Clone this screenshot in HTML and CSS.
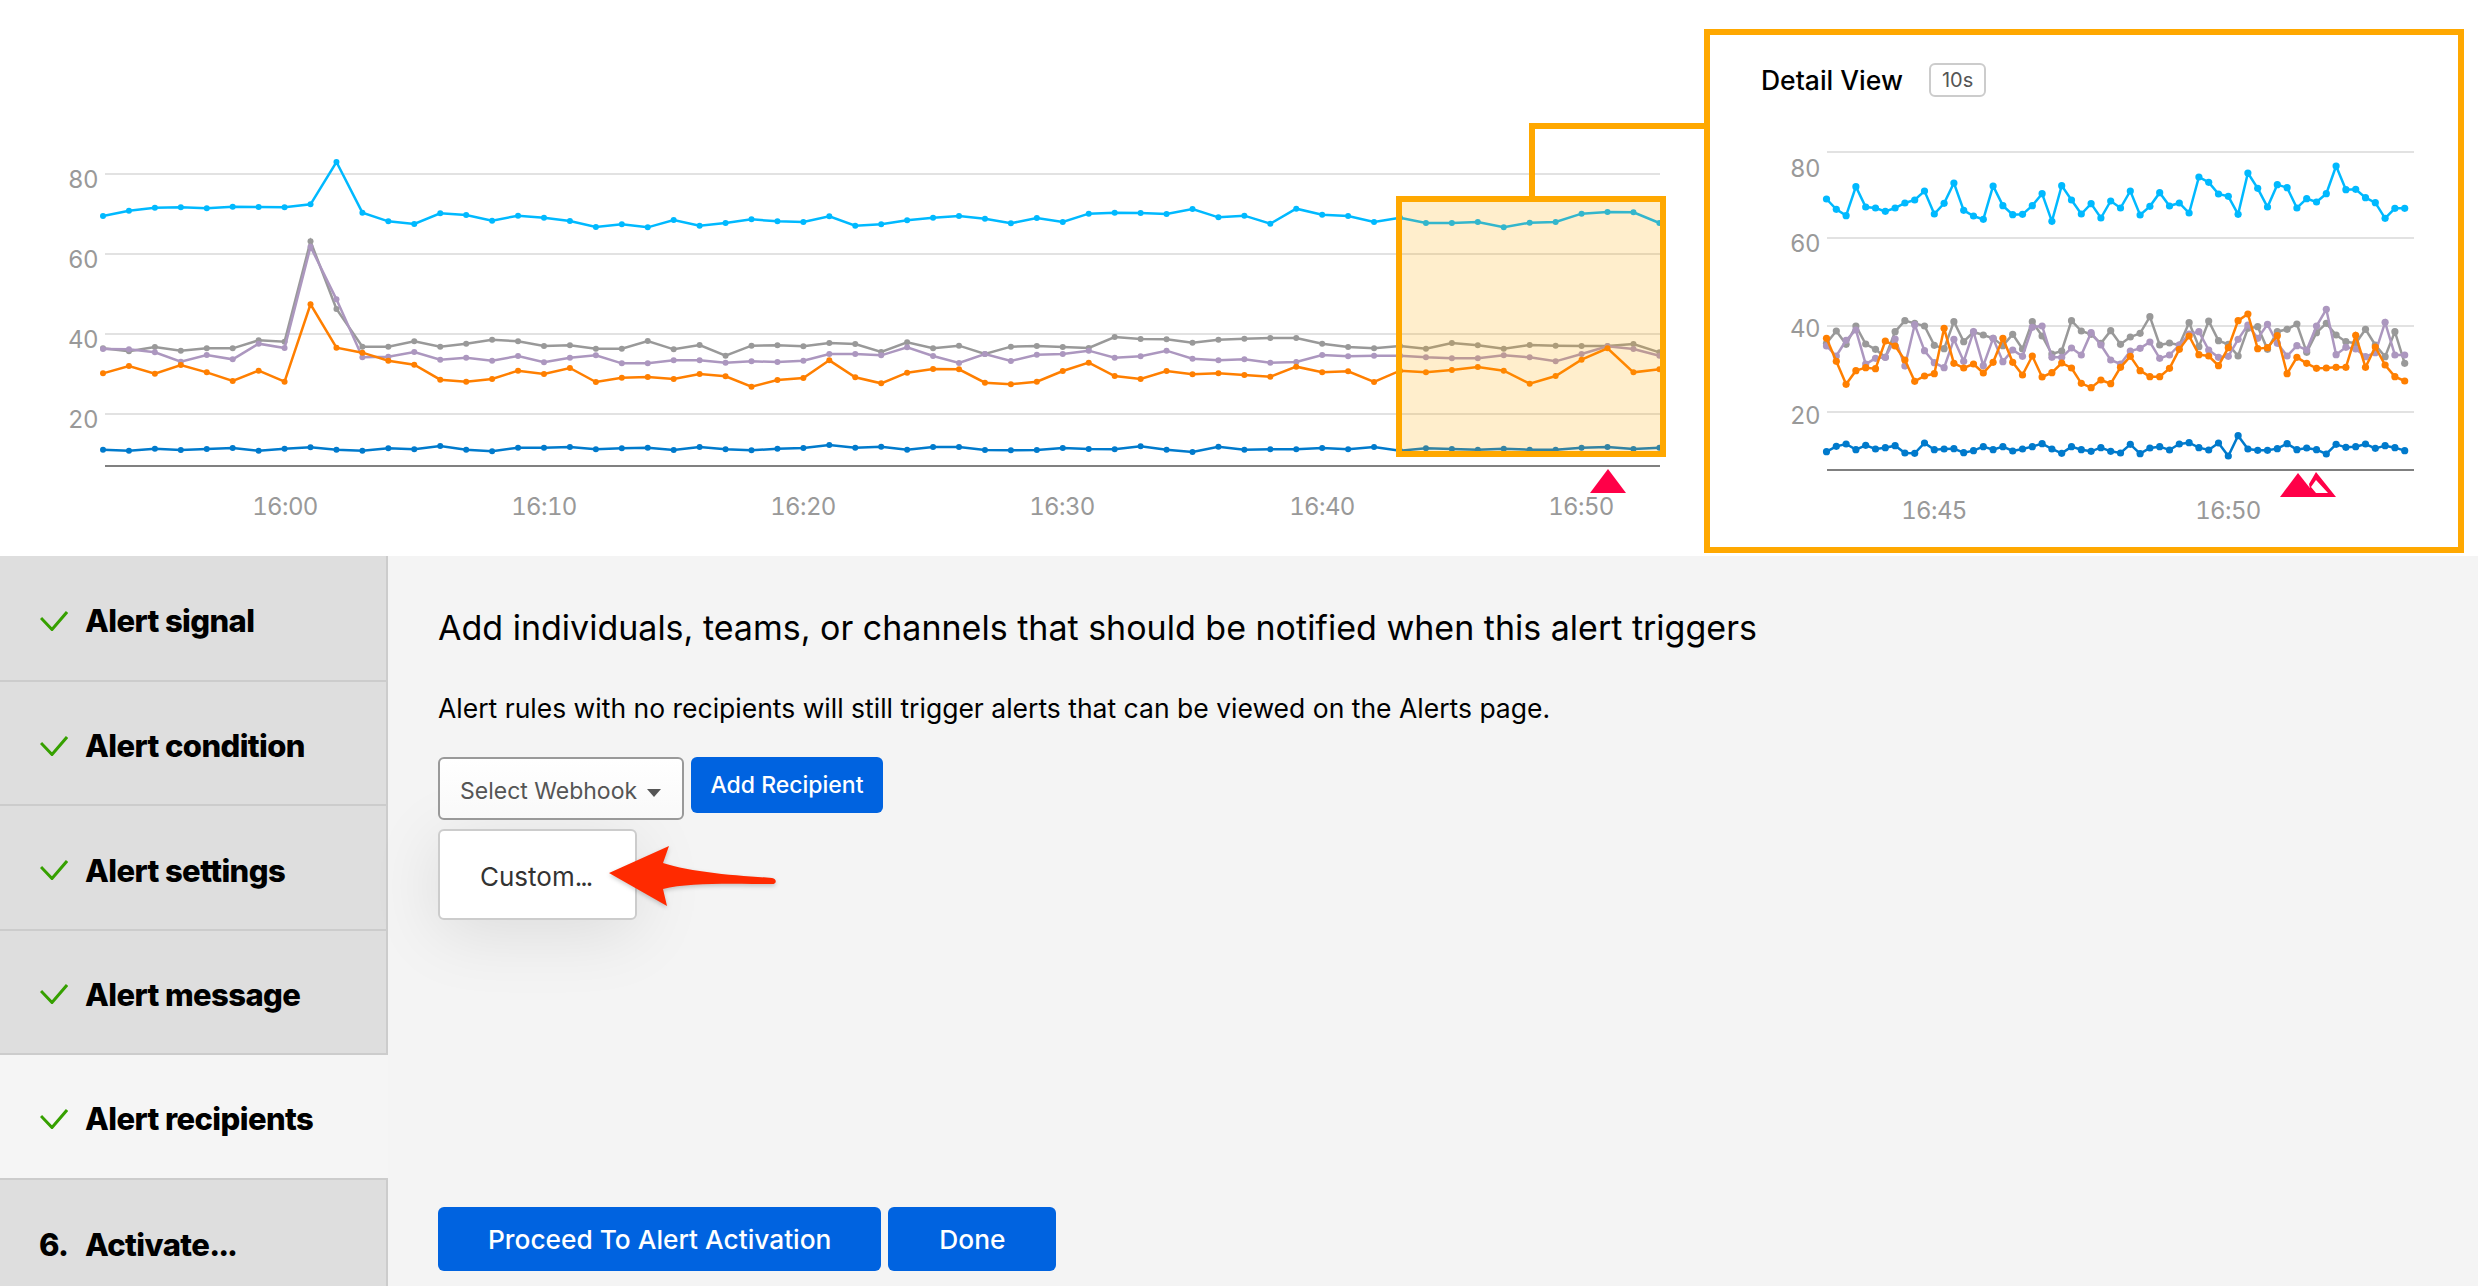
FILE: index.html
```html
<!DOCTYPE html>
<html lang="en">
<head>
<meta charset="UTF-8">
<title>Alert recipients</title>
<link rel="stylesheet" href="styles.css">
</head>
<body>
  <div class="charts">
    <svg class="overview" width="1704" height="556" viewBox="0 0 1704 556">
      <g class="grid">
        <line x1="105" y1="174" x2="1660" y2="174"/>
        <line x1="105" y1="254" x2="1660" y2="254"/>
        <line x1="105" y1="334" x2="1660" y2="334"/>
        <line x1="105" y1="414" x2="1660" y2="414"/>
      </g>
      <line class="axis" x1="105" y1="466" x2="1660" y2="466"/>
      <g class="tick">
        <text x="98" y="188" text-anchor="end">80</text>
        <text x="98" y="268" text-anchor="end">60</text>
        <text x="98" y="348" text-anchor="end">40</text>
        <text x="98" y="428" text-anchor="end">20</text>
        <text x="285" y="515" text-anchor="middle">16:00</text>
        <text x="544" y="515" text-anchor="middle">16:10</text>
        <text x="803" y="515" text-anchor="middle">16:20</text>
        <text x="1062" y="515" text-anchor="middle">16:30</text>
        <text x="1322" y="515" text-anchor="middle">16:40</text>
        <text x="1581" y="515" text-anchor="middle">16:50</text>
      </g>
      <g id="overviewLines"></g>
      <rect class="selection" x="1399" y="199" width="264" height="255"/>
      <path class="connector" d="M1532 196V126H1704"/>
      <polygon class="mark" points="1608,469 1626,493 1590,493"/>
    </svg>

    <div class="detail">
      <div class="detail-head">
        <span class="detail-title">Detail View</span>
        <span class="detail-badge">10s</span>
      </div>
      <svg class="detail-chart" width="748" height="512" viewBox="1710 35 748 512">
        <g class="grid">
          <line x1="1827" y1="152" x2="2414" y2="152"/>
          <line x1="1827" y1="238" x2="2414" y2="238"/>
          <line x1="1827" y1="326" x2="2414" y2="326"/>
          <line x1="1827" y1="412" x2="2414" y2="412"/>
        </g>
        <line class="axis" x1="1827" y1="470" x2="2414" y2="470"/>
        <g class="tick">
          <text x="1820" y="177" text-anchor="end">80</text>
          <text x="1820" y="252" text-anchor="end">60</text>
          <text x="1820" y="337" text-anchor="end">40</text>
          <text x="1820" y="424" text-anchor="end">20</text>
          <text x="1934" y="519" text-anchor="middle">16:45</text>
          <text x="2228" y="519" text-anchor="middle">16:50</text>
        </g>
        <g id="detailLines"></g>
        <polygon class="mark" points="2298,473 2317,497 2280,497"/>
        <path class="mark" fill-rule="evenodd" d="M2316 472L2336 497H2304L2310 489L2309 484ZM2316 480L2311 487L2316 493H2328Z"/>
      </svg>
    </div>
  </div>

  <div class="wizard">
    <ul class="steps">
      <li class="step"><svg class="check" viewBox="0 0 28 20"><path d="M1 7L12 18.5L27 1"/></svg>Alert signal</li>
      <li class="step"><svg class="check" viewBox="0 0 28 20"><path d="M1 7L12 18.5L27 1"/></svg>Alert condition</li>
      <li class="step"><svg class="check" viewBox="0 0 28 20"><path d="M1 7L12 18.5L27 1"/></svg>Alert settings</li>
      <li class="step"><svg class="check" viewBox="0 0 28 20"><path d="M1 7L12 18.5L27 1"/></svg>Alert message</li>
      <li class="step active"><svg class="check" viewBox="0 0 28 20"><path d="M1 7L12 18.5L27 1"/></svg>Alert recipients</li>
      <li class="step"><span class="step-num">6.</span>Activate<span class="dots">...</span></li>
    </ul>

    <div class="panel">
      <h2>Add individuals, teams, or channels that should be notified when this alert triggers</h2>
      <p>Alert rules with no recipients will still trigger alerts that can be viewed on the Alerts page.</p>

      <div class="recipient-row">
        <div class="select">Select Webhook<span class="caret"></span></div>
        <button class="btn btn-small">Add Recipient</button>
      </div>

      <div class="menu">Custom<span class="dots">...</span></div>

      <svg class="arrow" width="180" height="70" viewBox="0 0 180 70">
        <path d="M5 29L65 2L59 19C85 28 135 32 168 34C173 35 173 40 168 40C135 40 85 38 59 45L63 62Z"/>
      </svg>

      <div class="actions">
        <button class="btn">Proceed To Alert Activation</button>
        <button class="btn btn-done">Done</button>
      </div>
    </div>
  </div>

  <script src="chart.js"></script>
</body>
</html>
```

FILE: styles.css
```css
body {
  font-family: Inter, "Liberation Sans", sans-serif;
  margin: 0;
  padding: 0;
  height: 1286px;
  overflow: hidden;
  background-color: #f4f4f4;
  color: #000;
}

.charts {
  display: flex;
  align-items: flex-start;
  height: 556px;
  background-color: #fff;
}

.overview {
  display: block;
  flex: none;
}

.grid line {
  stroke: #e2e2e2;
  stroke-width: 2;
}

.axis {
  stroke: #808080;
  stroke-width: 2;
}

.tick text {
  font-size: 24px;
  font-variant-numeric: tabular-nums;
  letter-spacing: -0.6px;
  fill: #999;
}

.selection {
  fill: rgba(255, 168, 0, 0.2);
  stroke: #ffa800;
  stroke-width: 6;
}

.connector {
  fill: none;
  stroke: #ffa800;
  stroke-width: 6;
}

.mark {
  fill: #ff0048;
}

.detail {
  position: relative;
  box-sizing: border-box;
  width: 760px;
  height: 524px;
  margin-top: 29px;
  border: 6px solid #ffa800;
}

.detail-head {
  position: absolute;
  top: 28px;
  left: 51px;
  display: flex;
  align-items: center;
  gap: 26px;
}

.detail-title {
  font-size: 26.5px;
  font-weight: 500;
}

.detail-badge {
  padding: 3px 11px;
  border: 2px solid #ccc;
  border-radius: 6px;
  font-size: 20px;
  color: #555;
}

.detail-chart {
  display: block;
}

.wizard {
  display: flex;
  height: 730px;
}

.steps {
  flex: none;
  width: 388px;
  margin: 0;
  padding: 0;
  list-style: none;
}

.step {
  box-sizing: border-box;
  display: flex;
  align-items: center;
  height: 124.4px;
  padding: 5px 0 0 39px;
  background-color: #dedede;
  border-right: 2px solid #ccc;
  border-bottom: 2px solid #ccc;
  font-size: 31px;
  font-weight: 800;
  letter-spacing: -0.6px;
}

.step:first-child {
  height: 126px;
}

.step.active {
  background-color: #f5f5f5;
  border-right: none;
}

.step:last-child {
  border-bottom: none;
}

.check {
  flex: none;
  width: 28px;
  height: 20px;
  margin-left: 1px;
  margin-right: 17px;
  fill: none;
  stroke: #36a000;
  stroke-width: 3;
}

.step-num {
  width: 46px;
}

.dots {
  letter-spacing: -2px;
}

.panel {
  position: relative;
  flex: 1;
  padding: 0 0 0 50px;
}

h2 {
  margin: 48px 0 0;
  font-size: 34px;
  font-weight: 400;
  line-height: 48px;
}

p {
  margin: 38px 0 0;
  font-size: 26.5px;
  line-height: 36px;
}

.recipient-row {
  display: flex;
  align-items: flex-start;
  gap: 7px;
  margin-top: 31px;
}

.select {
  box-sizing: border-box;
  display: flex;
  align-items: center;
  gap: 10px;
  width: 246px;
  height: 63px;
  padding: 4px 0 0 20px;
  border: 2px solid #999;
  border-radius: 6px;
  background: linear-gradient(#fff, #f9f9f9);
  font-size: 23px;
  color: #555;
}

.caret {
  width: 0;
  height: 0;
  margin-top: 4px;
  border-left: 7px solid transparent;
  border-right: 7px solid transparent;
  border-top: 8px solid #555;
}

.btn {
  height: 64px;
  padding: 0 50px;
  border: none;
  border-radius: 6px;
  background-color: #0063e0;
  color: #fff;
  font-family: inherit;
  font-size: 26.3px;
  font-weight: 500;
}

.btn-small {
  width: 192px;
  height: 56px;
  padding: 0;
  font-size: 23px;
}

.btn-done {
  width: 168px;
  padding: 0;
}

.menu {
  box-sizing: border-box;
  width: 199px;
  height: 91px;
  margin-top: 9px;
  padding: 30px 0 0 40px;
  border: 2px solid #ccc;
  border-radius: 6px;
  background-color: #fff;
  box-shadow: 0 12px 70px rgba(0, 0, 0, 0.1);
  font-size: 26px;
  color: #333;
}

.arrow {
  position: absolute;
  left: 216px;
  top: 288px;
  fill: #ff2a00;
  filter: drop-shadow(0 2px 2px rgba(0, 0, 0, 0.2));
}

.actions {
  display: flex;
  gap: 7px;
  margin-top: 287px;
}
```

FILE: chart.js
```js
// y values are read at 3x, so they get divided back down when drawn
var overview = [
  { color: "#007acc", ys: [1049,1052,1046,1050,1047,1044,1052,1046,1042,1049,1052,1045,1048,1038,1049,1054,1043,1043,1041,1048,1045,1043,1050,1041,1048,1051,1046,1044,1035,1043,1040,1049,1041,1041,1050,1051,1050,1044,1047,1048,1039,1049,1056,1040,1049,1048,1048,1044,1048,1041,1052,1045,1047,1049,1046,1049,1049,1043,1041,1047,1043] },
  { color: "#00b9ff", ys: [348,332,323,322,325,320,321,322,313,186,338,364,372,340,345,362,347,353,363,381,373,382,360,377,369,358,364,366,349,377,373,361,353,348,356,370,354,366,341,338,339,342,327,352,347,371,326,344,348,366,353,369,369,366,382,368,366,341,336,337,369] },
  { color: "#999999", ys: [745,754,741,752,745,745,721,725,424,627,740,740,724,740,731,719,724,738,736,746,746,723,748,735,767,737,736,739,729,732,756,727,745,737,762,740,738,741,744,711,717,718,728,719,716,714,714,731,741,745,738,746,729,736,746,735,737,738,738,732,757] },
  { color: "#ac97bf", ys: [747,748,757,785,765,778,731,744,440,598,772,770,756,779,773,782,768,787,773,766,790,790,781,781,788,784,786,782,762,762,766,742,768,789,762,783,764,762,752,773,769,752,776,781,778,788,786,765,769,767,767,772,775,775,766,772,784,762,739,747,767] },
  { color: "#ff7f00", ys: [820,798,821,795,817,843,812,845,613,743,758,782,794,839,845,837,812,822,804,846,833,831,837,822,829,860,840,834,781,832,850,818,807,808,848,853,845,813,788,828,837,813,823,820,825,830,800,817,814,846,812,817,810,801,812,851,828,779,745,817,808] }
];

var detail = [
  { color: "#00b9ff", ys: [-243,-212,-193,-280,-219,-216,-206,-216,-231,-240,-267,-198,-230,-291,-209,-192,-182,-282,-223,-196,-197,-223,-259,-176,-283,-240,-198,-229,-186,-237,-216,-267,-195,-221,-262,-222,-231,-201,-309,-293,-258,-251,-197,-321,-275,-219,-286,-277,-216,-244,-234,-259,-342,-271,-272,-247,-232,-185,-215,-215] },
  { color: "#007acc", ys: [515,499,492,509,496,507,503,497,519,520,489,509,507,506,518,512,500,509,500,513,507,500,491,507,520,500,509,514,503,514,519,493,521,504,500,510,492,488,503,510,489,528,467,507,511,511,506,491,509,504,509,522,493,502,500,492,505,497,503,512] },
  { color: "#999999", ys: [190,153,193,138,192,208,232,155,122,130,138,196,206,125,185,156,165,175,197,163,207,125,168,222,213,122,153,163,190,152,193,171,160,110,195,189,195,128,200,123,182,193,228,145,140,208,155,148,132,217,158,130,165,185,190,148,195,230,155,250] },
  { color: "#ac97bf", ys: [198,228,181,150,252,235,232,177,258,134,212,248,263,178,244,155,257,175,245,210,229,142,138,232,232,204,225,158,195,240,252,213,205,186,235,225,195,162,155,210,232,229,178,135,175,133,190,228,197,210,138,88,224,202,207,230,218,127,225,225] },
  { color: "#ff7f00", ys: [175,244,313,272,263,266,183,198,240,304,288,281,145,250,264,252,279,247,175,247,285,228,291,278,249,264,310,323,300,311,262,229,272,290,290,265,208,168,224,228,257,203,122,102,206,203,167,281,232,250,265,264,262,262,166,262,201,255,290,303] }
];

function draw(group, data, x0, step, y0, radius, width) {
  var ns = "http://www.w3.org/2000/svg";
  var target = document.getElementById(group);

  data.forEach(function (s) {
    var points = s.ys.map(function (y, i) {
      return [x0 + step * i, y0 + y / 3];
    });

    var line = document.createElementNS(ns, "polyline");
    line.setAttribute("points", points.join(" "));
    line.setAttribute("fill", "none");
    line.setAttribute("stroke", s.color);
    line.setAttribute("stroke-width", width);
    target.appendChild(line);

    points.forEach(function (p) {
      var dot = document.createElementNS(ns, "circle");
      dot.setAttribute("cx", p[0]);
      dot.setAttribute("cy", p[1]);
      dot.setAttribute("r", radius);
      dot.setAttribute("fill", s.color);
      target.appendChild(dot);
    });
  });
}

draw("overviewLines", overview, 103, 25.94, 100, 3, 2.5);
draw("detailLines", detail, 1826.5, 9.8, 280, 3.6, 2.5);
```
